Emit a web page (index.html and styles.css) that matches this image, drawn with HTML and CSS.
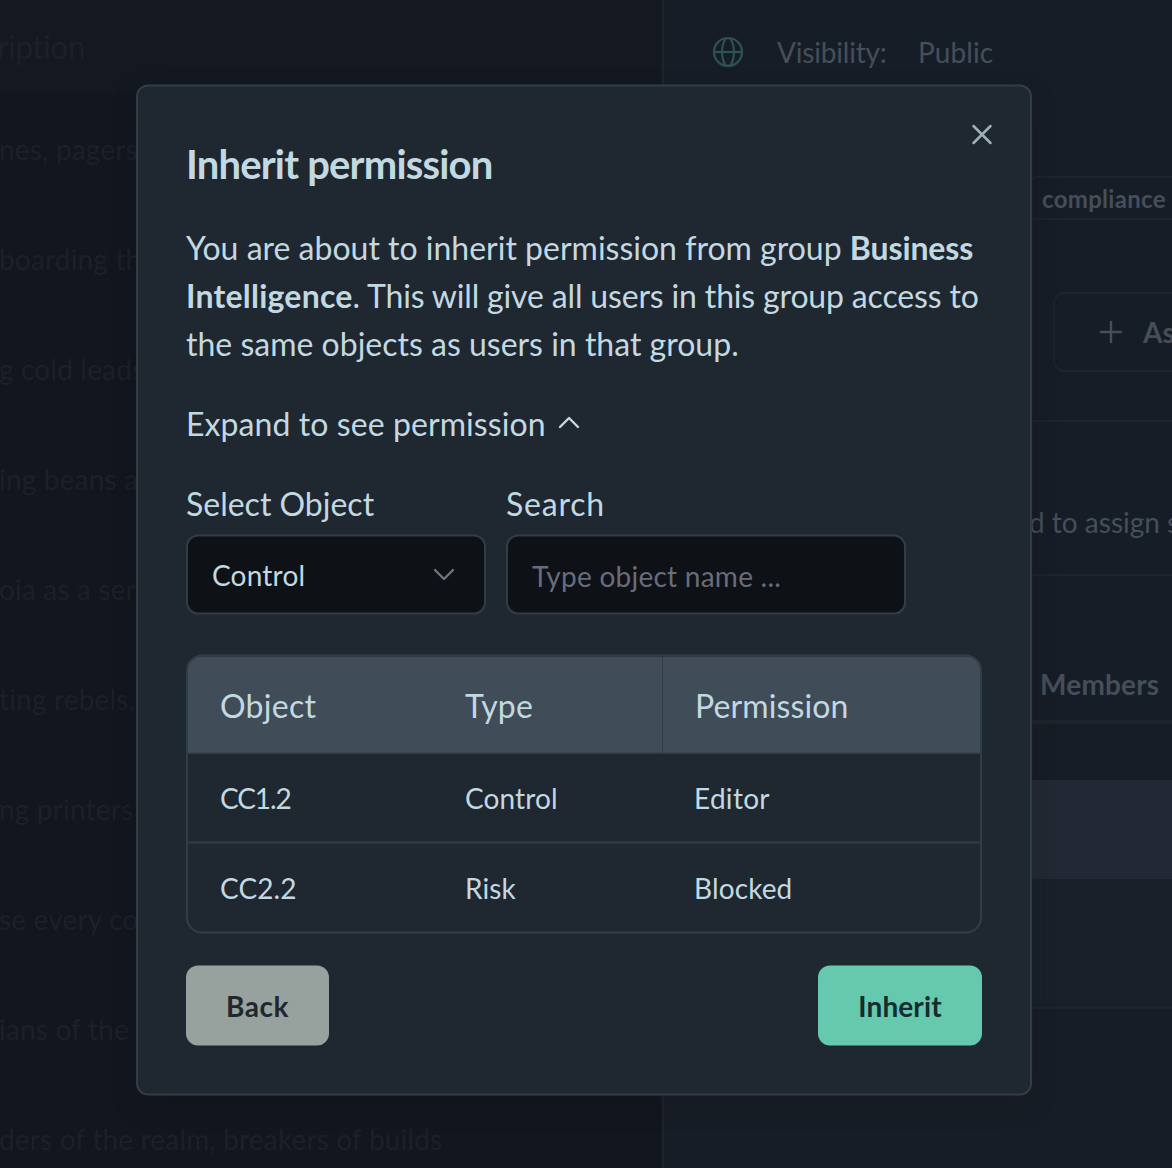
FILE: index.html
```
<!DOCTYPE html>
<html lang="en">
<head>
<meta charset="utf-8">
<title>Inherit permission</title>
<link rel="stylesheet" href="styles.css">
</head>
<body>
<div class="page">
  <section class="groups">
    <div class="groups-head">ription</div>
    <div class="group-row">nes, pagers,</div>
    <div class="group-row">boarding the</div>
    <div class="group-row">g cold leads</div>
    <div class="group-row">ing beans a</div>
    <div class="group-row">oia as a ser</div>
    <div class="group-row">ting rebels,</div>
    <div class="group-row">ng printers</div>
    <div class="group-row">se every co</div>
    <div class="group-row">ians of the</div>
    <div class="group-row">ders of the realm, breakers of builds</div>
  </section>
  <aside class="details">
    <div class="visibility">
      <svg class="globe" viewBox="0 0 32 32"><circle cx="16" cy="16" r="14"/><ellipse cx="16" cy="16" rx="6" ry="14"/><path d="M2 16h28"/></svg>
      <span class="visibility-label">Visibility:</span>
      <span class="visibility-value">Public</span>
    </div>
    <div class="tags"><span class="tag">compliance</span></div>
    <div class="assign">
      <button class="assign-button"><svg class="plus" viewBox="0 0 24 24"><path d="M12 2v20M2 12h20"/></svg>As</button>
    </div>
    <div class="hint">d to assign s</div>
    <div class="members-head">Members</div>
    <div class="members-gap"></div>
    <div class="members-selected"></div>
    <div class="members-row"></div>
  </aside>
</div>

<div class="modal">
  <button class="close" aria-label="Close"><svg viewBox="0 0 24 24"><path d="M3.5 3.5l17 17M20.5 3.5l-17 17"/></svg></button>
  <h1 class="title">Inherit permission</h1>
  <p class="message">You are about to inherit permission from group <b class="name-first">Business</b><br><b class="name-rest">Intelligence</b><span class="message-mid">. This will give all users in this group access to</span><br>the same objects as users in that group.</p>
  <div class="expand">Expand to see permission
    <svg class="chevron-up" viewBox="0 0 24 16"><path d="M3 12.5l9-9 9 9"/></svg>
  </div>
  <div class="filters">
    <div class="field field-select">
      <span class="label">Select Object</span>
      <div class="box"><span class="select-value">Control</span><svg class="chevron-down" viewBox="0 0 24 16"><path d="M3 3.5l9 9 9-9"/></svg></div>
    </div>
    <div class="field field-search">
      <span class="label label-search">Search</span>
      <div class="box"><input class="search" placeholder="Type object name ..."></div>
    </div>
  </div>
  <div class="table">
    <div class="row row-head">
      <span class="cell wide">Object</span><span class="cell">Type</span><span class="cell divided">Permission</span>
    </div>
    <div class="row row-body">
      <span class="cell tight">CC1.2</span><span class="cell">Control</span><span class="cell wide">Editor</span>
    </div>
    <div class="row row-body row-last">
      <span class="cell">CC2.2</span><span class="cell">Risk</span><span class="cell">Blocked</span>
    </div>
  </div>
  <div class="actions">
    <button class="button back">Back</button>
    <button class="button inherit">Inherit</button>
  </div>
</div>
</body>
</html>
```

FILE: styles.css
```
* {
  box-sizing: border-box;
}

body {
  margin: 0;
  background: #12161e;
  font-family: Lato, "Liberation Sans", sans-serif;
  font-size: 32px;
  color: #c2d9e1;
}

button,
input {
  font-family: inherit;
  margin: 0;
  padding: 0;
  border: 0;
  background: none;
}

svg {
  display: block;
  fill: none;
  stroke: currentColor;
  stroke-width: 2;
  flex: none;
}

.page {
  display: flex;
  width: 1172px;
  height: 1168px;
  overflow: hidden;
}

/* group list */
.groups {
  width: 662px;
  flex: none;
  overflow: hidden;
  color: #1c2029;
}

.groups-head {
  height: 94px;
  padding-top: 27px;
  text-indent: -3px;
  line-height: 40px;
  font-size: 32px;
  letter-spacing: -0.6px;
  background: #141820;
  white-space: nowrap;
}

.group-row {
  height: 110px;
  padding-top: 1px;
  text-indent: -1px;
  line-height: 108px;
  font-size: 28px;
  letter-spacing: 0.17px;
  white-space: nowrap;
  border-bottom: 2px solid #131720;
}

/* group details */
.details {
  flex: 1;
  min-width: 0;
  border-left: 2px solid #1e232c;
  background: #171d26;
  color: #454e59;
  overflow: hidden;
  white-space: nowrap;
}

.visibility {
  display: flex;
  align-items: center;
  height: 104px;
  padding-left: 48px;
  font-size: 28px;
}

.globe {
  width: 32px;
  height: 32px;
  stroke-width: 2.2;
  color: #2d5250;
}

.visibility-label {
  margin-left: 33px;
  width: 109px;
  letter-spacing: -0.2px;
}

.visibility-value {
  margin-left: 32px;
  letter-spacing: 0.1px;
}

.tags {
  display: flex;
  height: 188px;
  padding: 72px 0 0 360px;
}

.tag {
  height: 44px;
  padding: 0 22px 0 16px;
  border: 2px solid #1e232c;
  border-radius: 14px;
  font-size: 24px;
  font-weight: 700;
  line-height: 41px;
  letter-spacing: 0.3px;
  flex: none;
}

.assign {
  height: 130px;
  padding-left: 389px;
  border-bottom: 2px solid #1e232c;
}

.assign-button {
  display: flex;
  align-items: center;
  gap: 20px;
  width: 220px;
  height: 80px;
  padding-left: 44px;
  border: 2px solid #1e232c;
  border-radius: 12px;
  font-size: 28px;
  font-weight: 700;
  color: #454e59;
}

.plus {
  width: 24px;
  height: 24px;
  stroke-width: 2.4;
  stroke-linecap: round;
}

.hint {
  height: 154px;
  padding: 24px 0 0 365px;
  border-bottom: 2px solid #1e232c;
  font-size: 28px;
  line-height: 152px;
}

.members-head {
  height: 148px;
  padding: 71px 0 0 376px;
  border-bottom: 4px solid #1e232c;
  font-size: 28px;
  font-weight: 700;
  line-height: 75px;
  letter-spacing: 0.2px;
}

.members-gap {
  height: 56px;
}

.members-selected {
  height: 99px;
  background: #232934;
}

.members-row {
  height: 130px;
  background: #192029;
  border-bottom: 2px solid #1e232c;
}

/* dialog over the page */
.modal {
  position: absolute;
  left: 136px;
  top: 84px;
  width: 896px;
  height: 1011px;
  padding: 57px 48px 0;
  transform: translateY(0.5px);
  border: 2px solid #323d48;
  border-radius: 12px;
  background: #1f2730;
  box-shadow: 0 10px 24px rgba(18, 18, 26, 0.25);
}

.close {
  position: absolute;
  right: 36px;
  top: 36px;
  color: #9db0b7;
}

.close svg {
  width: 24px;
  height: 24px;
  stroke-width: 2.5;
  stroke-linecap: round;
}

.title {
  height: 40px;
  margin: 0 0 40px;
  font-size: 40px;
  font-weight: 700;
  line-height: 40px;
  letter-spacing: -0.82px;
}

.message {
  margin: 0 0 31px;
  line-height: 48px;
  white-space: nowrap;
}

.message b {
  font-weight: 700;
}

.name-first {
  letter-spacing: -0.1px;
}

.name-rest {
  letter-spacing: 0.22px;
}

.message-mid {
  letter-spacing: -0.16px;
}

.expand {
  display: flex;
  align-items: center;
  gap: 11px;
  height: 48px;
  margin-bottom: 33px;
  letter-spacing: 0.08px;
}

.chevron-up,
.chevron-down {
  width: 24px;
  height: 16px;
  stroke-width: 2.4;
  stroke-linecap: round;
  stroke-linejoin: round;
}

.filters {
  display: flex;
  gap: 20px;
  margin-bottom: 40px;
}

.field-select {
  width: 300px;
}

.field-search {
  width: 400px;
}

.label {
  display: block;
  height: 55px;
  line-height: 47px;
}

.label-search {
  letter-spacing: 0.8px;
}

.box {
  display: flex;
  align-items: center;
  justify-content: space-between;
  height: 80px;
  padding: 0 28px 0 24px;
  border: 2px solid #323d48;
  border-radius: 12px;
  background: #0e1115;
  font-size: 28px;
}

.select-value {
  letter-spacing: 0.2px;
}

.chevron-down {
  color: #6a777c;
}

.search {
  width: 100%;
  height: 76px;
  padding-top: 1px;
  font-size: 28px;
  letter-spacing: 0.25px;
  outline: 0;
  color: inherit;
}

.search::placeholder {
  color: #686c7c;
  opacity: 1;
}

.table {
  overflow: hidden;
  margin-bottom: 32px;
  border: 2px solid #323d48;
  border-radius: 16px;
}

.row {
  display: grid;
  grid-template-columns: 245px 229px 1fr;
  height: 90px;
  font-size: 28px;
  line-height: 88px;
  border-bottom: 2px solid #323d48;
}

.row-head {
  height: 97px;
  border-bottom-width: 1px;
  background: #404c58;
  font-size: 32px;
  line-height: 97px;
}

.row-last {
  height: 88px;
  border-bottom: 0;
}

.cell {
  height: 100%;
  overflow: hidden;
  padding-left: 32px;
  letter-spacing: 0.12px;
}

.divided {
  border-left: 1px solid #323d48;
}

.wide {
  letter-spacing: 0.3px;
}

.tight {
  letter-spacing: -1.1px;
}

.actions {
  display: flex;
  justify-content: space-between;
}

.button {
  height: 80px;
  border-radius: 12px;
  font-size: 28px;
  font-weight: 700;
}

.back {
  width: 143px;
  background: #97a19d;
  color: #20272f;
  letter-spacing: 0.5px;
}

.inherit {
  width: 164px;
  background: #65c9ad;
  color: #152c30;
  letter-spacing: 0.1px;
}
```
